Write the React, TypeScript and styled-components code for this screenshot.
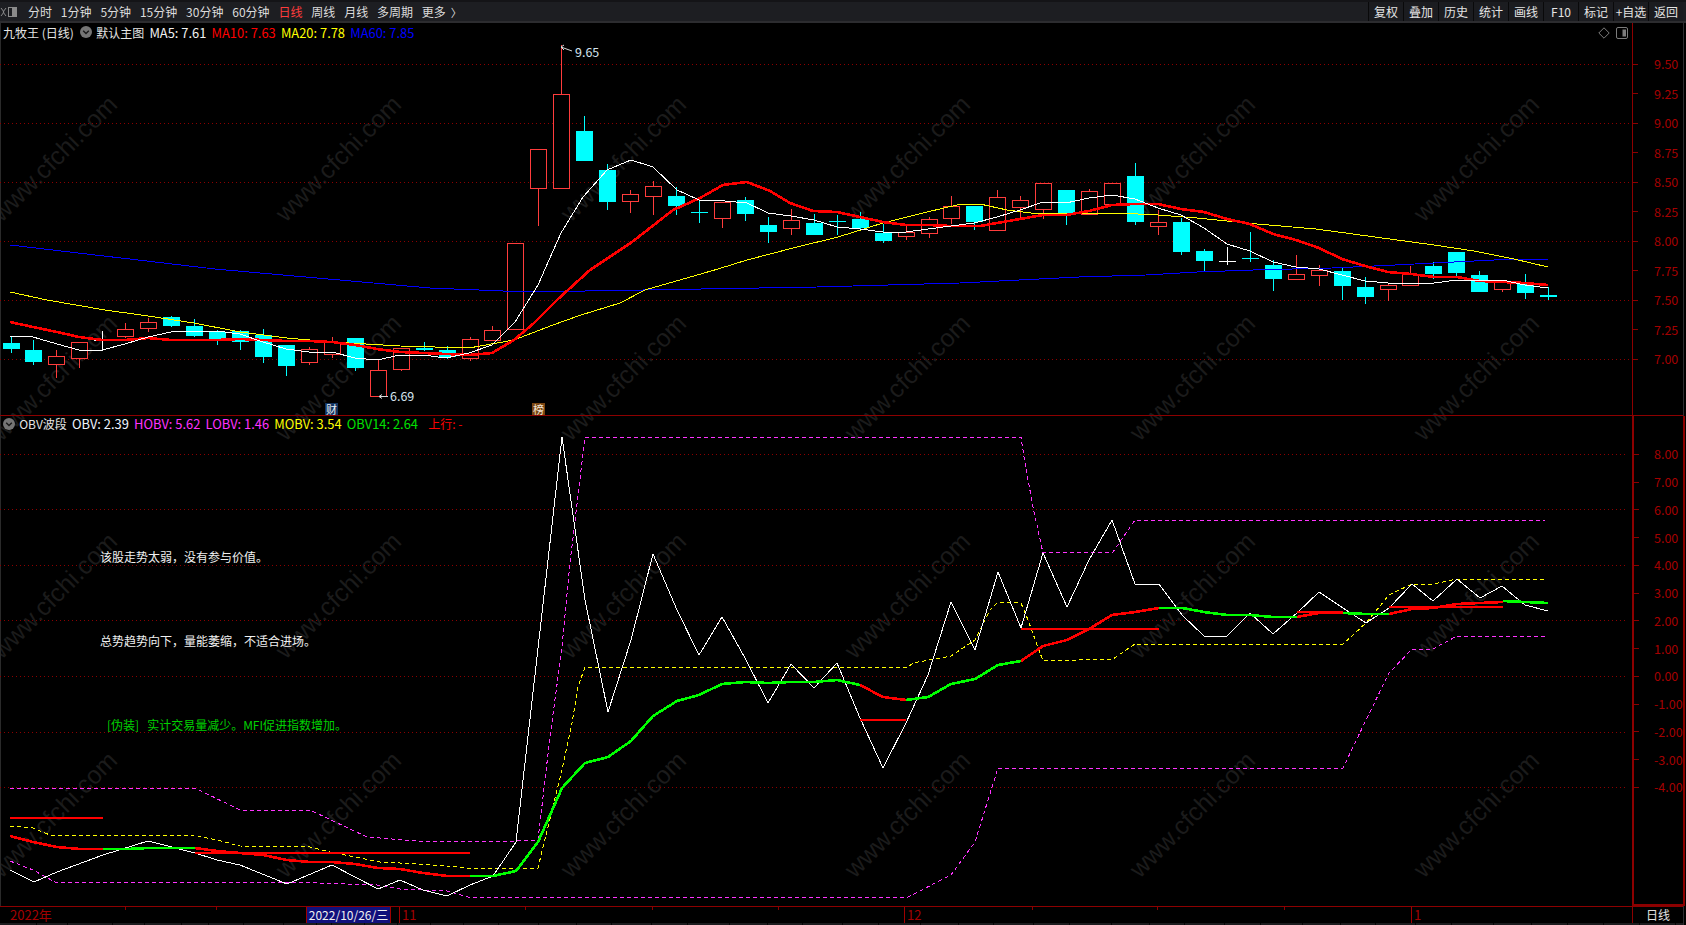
import React from "react";
import styled, { createGlobalStyle } from "styled-components";

const FONT = `"Noto Sans CJK SC", "Liberation Sans", sans-serif`;
const AXIS_RED = "#8c0000";

const GlobalStyle = createGlobalStyle`
  html, body { margin: 0; padding: 0; background: #000; overflow: hidden; }
  #root { width: 1686px; height: 925px; }
`;

const Screen = styled.div`
  width: 1686px;
  height: 925px;
  display: flex;
  flex-direction: column;
  background: #000;
  color: #ddd;
  font: 12px/16px ${FONT};
  overflow: hidden;
`;

/* ---------- toolbar ---------- */
const Toolbar = styled.header`
  flex: 0 0 23px;
  box-sizing: border-box;
  display: flex;
  align-items: stretch;
  background: #1d1e22;
  border-top: 2px solid #141417;
  border-bottom: 2px solid #2c2c2f;
`;
const LogoButton = styled.div`
  flex: 0 0 28px;
  display: flex;
  align-items: center;
`;
const PeriodList = styled.nav`
  display: flex;
  align-items: center;
  gap: 8.85px;
`;
const PeriodItem = styled.span<{ $active?: boolean }>`
  white-space: nowrap;
  color: ${(p) => (p.$active ? "#ff3c3c" : "#dcdcdc")};
`;
const Chevron = styled.span`
  margin-left: -4px;
  font-size: 11px;
  color: #dcdcdc;
`;
const ToolGroup = styled.div`
  margin-left: auto;
  margin-right: 3px;
  display: flex;
`;
const ToolButton = styled.span`
  width: 35px;
  box-sizing: border-box;
  display: flex;
  align-items: center;
  justify-content: center;
  white-space: nowrap;
  border-left: 1px solid #09090a;
  background: #1b1c20;
  color: #e4e4e4;
`;

/* ---------- workspace ---------- */
const Workspace = styled.main`
  position: relative;
  flex: 1;
  display: flex;
  flex-direction: column;
  width: 1684px;
  box-sizing: border-box;
  border-right: 1px solid #2e2e30;
`;
const WatermarkLayer = styled.div`
  position: absolute;
  top: 26px;
  left: -88px;
  width: 1706px;
  display: grid;
  grid-template-columns: repeat(6, 284.4px);
  grid-auto-rows: 218.7px;
  pointer-events: none;
`;
const Watermark = styled.span`
  display: flex;
  align-items: center;
  justify-content: center;
  transform: rotate(-45deg);
  font: 25px "Liberation Sans", sans-serif;
  color: #1b1b1b;
  white-space: nowrap;
`;
const Pane = styled.section<{ $height: number; $ruled?: boolean }>`
  position: relative;
  flex: 0 0 ${(p) => p.$height}px;
  display: flex;
  border-top: ${(p) => (p.$ruled ? `1px solid ${AXIS_RED}` : "0")};
`;
const Plot = styled.div`
  position: relative;
  flex: 0 0 1632px;
  box-shadow: inset 1px 0 0 #2a2a2a;
`;
const ChartSvg = styled.svg`
  display: block;
  position: absolute;
  inset: 0;
`;
const Axis = styled.div<{ $pad: number; $boxed?: boolean }>`
  flex: 1;
  box-sizing: border-box;
  padding-top: ${(p) => p.$pad}px;
  border-left: ${(p) => (p.$boxed ? 2 : 1)}px solid ${AXIS_RED};
  border-right: ${(p) => (p.$boxed ? `2px solid ${AXIS_RED}` : "0")};
  border-bottom: ${(p) => (p.$boxed ? `2px solid ${AXIS_RED}` : "0")};
`;
const AxisRow = styled.div<{ $h: number; $indent: number }>`
  height: ${(p) => p.$h}px;
  display: flex;
  align-items: center;
  font-size: 12.5px;
  color: #a40000;
  &::before {
    content: "";
    flex: 0 0 5px;
    height: 1px;
    margin-right: ${(p) => p.$indent}px;
    background: ${AXIS_RED};
  }
`;

/* ---------- overlays on the plots ---------- */
const Legend = styled.div<{ $top: number }>`
  position: absolute;
  top: ${(p) => p.$top}px;
  left: 3px;
  display: flex;
  align-items: center;
  gap: 5.2px;
  white-space: nowrap;
`;
const LegendItem = styled.span<{ $color?: string; $gap?: number; $latin?: boolean }>`
  color: ${(p) => p.$color ?? "#e4e4e4"};
  margin-left: ${(p) => p.$gap ?? 0}px;
  font-size: ${(p) => (p.$latin ? 12.9 : 12)}px;
`;
const CornerIcons = styled.div`
  position: absolute;
  top: 4px;
  right: 4px;
  display: flex;
  align-items: center;
  gap: 6.5px;
`;
const Note = styled.div<{ $x: number; $y: number; $color?: string }>`
  position: absolute;
  left: ${(p) => p.$x}px;
  top: ${(p) => p.$y}px;
  white-space: nowrap;
  color: ${(p) => p.$color ?? "#f0f0f0"};
`;
const NoteTag = styled.span`
  margin-right: 8px;
`;
const EventTag = styled.span<{ $x: number; $bg: string; $color: string }>`
  position: absolute;
  left: ${(p) => p.$x}px;
  top: 380px;
  width: 13px;
  height: 12px;
  font-size: 11px;
  line-height: 12px;
  text-align: center;
  background: ${(p) => p.$bg};
  color: ${(p) => p.$color};
`;

/* ---------- time axis ---------- */
const TimeAxis = styled.footer`
  position: relative;
  flex: 0 0 16px;
  box-sizing: border-box;
  display: grid;
  grid-template-columns: 306px 85px 8px 505px 507px 221px 1fr;
  border-top: 1px solid ${AXIS_RED};
  color: #a40000;
`;
const YearLabel = styled.span`
  padding-left: 10px;
  font-size: 13px;
`;
const DateBadge = styled.span`
  background: #10107c;
  color: #f0f0f0;
  border-left: 1px solid #a00000;
  border-right: 1px solid #a00000;
  text-align: center;
  white-space: nowrap;
`;
const MonthLabel = styled.span`
  border-left: 1px solid #a00000;
  padding-left: 2px;
  font-size: 13px;
`;
const PeriodCell = styled.span`
  border-left: 1px solid ${AXIS_RED};
  text-align: center;
  color: #e4e4e4;
`;
const AxisTicks = styled.svg`
  position: absolute;
  left: 0;
  top: 0;
`;
const StatusStrip = styled.div`
  flex: 1;
  display: flex;
  background: #1c1c1e;
`;
const StatusCell = styled.span<{ $w: number }>`
  flex: 0 0 ${(p) => p.$w}px;
  box-sizing: border-box;
  border-right: 1px solid #060606;
`;

/* ---------- data ---------- */
type Kind = "r" | "c" | "w";
type Candle = [number, number, number, number, Kind];
const candles: Candle[] = [
  [336,343,349,353,"c"],[340,350,362,365,"c"],[350,356,364,378,"r"],[342,342,358,368,"r"],[331,340,340,351,"w"],
  [323,329,336,338,"r"],[318,322,328,332,"r"],[316,317,326,327,"c"],[319,326,336,337,"c"],[330,332,339,345,"c"],
  [330,331,342,350,"c"],[329,335,357,363,"c"],[345,345,366,376,"c"],[347,349,362,365,"r"],[337,342,354,358,"r"],
  [338,338,368,371,"c"],[359,370,396,396,"r"],[348,348,369,371,"r"],[342,348,350,351,"c"],[346,350,357,359,"c"],
  [337,339,358,361,"r"],[326,330,340,340,"r"],[243,243,329,329,"r"],[149,149,188,226,"r"],[45,94,188,188,"r"],
  [116,131,161,161,"c"],[164,170,202,210,"c"],[190,194,201,213,"r"],[181,186,196,215,"r"],[187,196,206,215,"c"],
  [200,212,212,223,"c"],[202,202,218,228,"r"],[197,200,214,221,"c"],[217,225,232,243,"c"],[209,220,228,235,"r"],
  [214,223,235,235,"c"],[215,221,221,235,"c"],[212,219,228,231,"c"],[224,233,241,243,"c"],[225,232,236,240,"r"],
  [217,219,233,238,"r"],[196,206,218,224,"r"],[206,206,222,230,"c"],[190,197,230,230,"r"],[196,200,207,219,"r"],
  [183,183,209,219,"r"],[190,190,213,225,"c"],[189,191,214,214,"r"],[183,183,204,204,"r"],[163,176,222,225,"c"],
  [210,222,226,235,"r"],[218,222,252,255,"c"],[249,251,261,272,"c"],[247,261,261,265,"w"],[232,258,258,262,"c"],
  [260,265,279,291,"c"],[255,274,279,279,"r"],[265,270,275,286,"r"],[268,271,286,300,"c"],[277,287,297,304,"c"],
  [283,285,289,301,"r"],[266,274,285,285,"r"],[262,266,274,279,"c"],[252,252,273,276,"c"],[271,275,292,292,"c"],
  [282,282,289,292,"r"],[274,283,293,299,"c"],[287,295,297,300,"c"],
];
const cx = (i: number) => Math.round(10.5 + 22.95 * i);

const ma5 = "10,336 33,337 57,344 79,350 102,350 125,344 148,337 171,332 194,331 217,331 240,334 263,342 286,349 309,352 332,352 355,358 377,360 400,355 423,355 446,358 469,353 492,345 515,322 538,285 561,233 583,197 607,170 631,160 653,167 677,190 699,200 725,201 747,203 768,213 791,216 814,220 837,227 860,229 883,232 906,232 928,229 951,226 974,223 997,217 1020,210 1043,202 1066,203 1089,198 1112,195 1135,199 1158,208 1181,215 1204,228 1227,244 1250,251 1273,262 1296,267 1319,269 1342,275 1365,281 1388,283 1411,283 1434,283 1457,280 1480,280 1502,280 1525,285 1548,288";
const ma10 = "10,322 33,327 57,332 79,337 102,340 125,340 148,338 171,340 194,340 217,340 240,339 263,340 286,341 309,341 332,342 355,345 377,349 400,352 423,353 446,354 469,355 492,353 514,340 534,323 557,300 590,270 632,242 673,210 700,198 723,185 747,182 770,191 790,203 813,211 837,212 860,217 883,222 906,225 928,225 951,226 980,226 1020,219 1043,215 1066,215 1089,211 1112,205 1135,204 1158,204 1181,209 1204,212 1227,219 1250,224 1273,234 1296,240 1319,248 1342,259 1365,266 1388,272 1411,274 1434,277 1457,277 1480,281 1502,282 1525,283 1548,285";
const ma20 = "10,292 47,300 105,310 148,316 194,323 240,332 287,338 332,342 400,346 469,348 480,346 514,340 553,325 581,315 620,303 645,290 718,269 747,260 793,248 838,237 883,223 927,212 957,205 980,204 1007,210 1031,213 1118,213 1158,215 1197,218 1257,224 1316,229 1375,237 1434,245 1474,251 1514,259 1548,267";
const ma60 = "10,245 215,269 430,288 527,292 817,287 960,283 1079,277 1146,275 1197,272 1253,270 1332,268 1395,265 1454,262 1514,259 1548,259";

const obv = "10,870 34,882 57,872 103,855 148,841 195,853 217,860 240,865 287,884 332,865 378,889 400,880 423,890 447,896 470,885 493,876 516,842 562,437 585,600 608,712 631,640 653,554 677,610 699,655 722,617 745,658 768,703 791,664 814,688 837,663 860,718 883,768 906,723 928,675 951,602 975,650 998,572 1021,628 1043,553 1067,607 1089,560 1112,520 1135,584 1159,584 1182,615 1204,636 1227,636 1250,613 1273,634 1297,613 1319,592 1343,608 1366,623 1389,608 1412,584 1433,601 1457,579 1480,598 1502,586 1525,605 1548,611";
const mobv = "10,826 33,828 50,835 193,835 217,840 240,846 310,847 330,852 380,862 400,863 447,866 467,868 538,868 543,847 562,770 572,723 578,687 585,667 908,667 913,663 951,656 975,640 990,610 998,602 1021,603 1028,620 1043,661 1113,659 1135,644 1343,644 1366,623 1389,595 1412,584 1433,584 1457,579 1545,579";
const hobv = "10,788 195,788 240,810 310,810 367,837 417,841 516,841 538,840 550,737 562,647 570,563 585,437 1021,437 1025,463 1033,507 1043,553 1063,552 1113,552 1135,520 1545,520";
const lobv = "10,861 33,870 55,882 287,882 377,885 400,889 447,891 468,897 908,897 951,875 975,842 998,768 1343,768 1366,720 1389,673 1412,649 1433,649 1457,636 1546,636";

const obv14: [string, string][] = [
  ["#ff0000", "10,836 33,842 57,847 80,849 103,849"],
  ["#00ff00", "103,849 127,849 148,848 195,848"],
  ["#ff0000", "195,848 217,851 240,853 263,855 287,860 310,862 332,862 355,864 378,868 400,869 423,873 447,876 470,876"],
  ["#00ff00", "470,876 493,876 516,871 538,842 562,788 585,763 608,757 631,741 653,716 677,701 699,695 722,684 745,682 768,683 791,682 814,682 837,680 860,685"],
  ["#ff0000", "860,685 883,697 906,700"],
  ["#00ff00", "906,700 928,697 951,684 975,679 998,665 1021,661"],
  ["#ff0000", "1021,661 1043,646 1067,640 1089,629 1112,615 1135,612 1159,608"],
  ["#00ff00", "1159,608 1182,608 1204,612 1227,615 1250,615 1273,617 1297,617"],
  ["#ff0000", "1297,617 1319,613 1343,613"],
  ["#00ff00", "1343,613 1366,614 1389,614"],
  ["#ff0000", "1389,614 1412,609 1433,608 1457,604 1480,603 1503,602"],
  ["#00ff00", "1503,601 1525,602 1548,603"],
];
const levels = [
  [10, 818, 103],
  [195, 853, 470],
  [860, 720, 906],
  [1021, 629, 1159],
  [1297, 612, 1343],
  [1389, 607, 1503],
];

const priceLabels = ["9.50","9.25","9.00","8.75","8.50","8.25","8.00","7.75","7.50","7.25","7.00"];
const obvLabels = ["8.00","7.00","6.00","5.00","4.00","3.00","2.00","1.00","0.00","-1.00","-2.00","-3.00","-4.00"];
const priceGrid = [64.5, 123.5, 182.5, 241.5, 300.5, 359.5];
const obvGrid = [454.5, 509.5, 565.5, 620.5, 676.5, 732.5, 787.5];
const periods = ["分时","1分钟","5分钟","15分钟","30分钟","60分钟","日线","周线","月线","多周期","更多"];
const tools = ["复权","叠加","历史","统计","画线","F10","标记","+自选","返回"];
const tickXs = [125, 216, 525, 652, 778, 1032, 1157, 1284];
const statusCells = [37, 31, 45, 32, 37, 27, 35, 40, 33, 15, 33, 33, 33, 33, 35, 40, 38, 35, 40, 36, 42, 38, 35, 40, 36, 42, 38, 35, 40, 36, 42, 38, 35, 40, 36, 42, 38, 35, 40, 36, 42, 38, 36, 36, 36, 36, 36, 36, 36, 36, 36];
const watermarks = Array.from({ length: 24 }, (_, i) => i);

const CANDLE_COLOR: Record<Kind, string> = { r: "#ff3c3c", c: "#00ffff", w: "#ffffff" };

function CandleShape({ c, i }: { c: Candle; i: number }) {
  const [hi, top, bot, lo, kind] = c;
  const x = cx(i);
  const color = CANDLE_COLOR[kind];
  const px = x + 0.5;
  if (bot - top < 1) {
    return (
      <g stroke={color}>
        <line x1={px} x2={px} y1={hi} y2={lo} />
        <line x1={x - 8} x2={x + 9} y1={top + 0.5} y2={top + 0.5} />
      </g>
    );
  }
  return (
    <g>
      {hi < top && <line x1={px} x2={px} y1={hi} y2={top} stroke={color} />}
      {lo > bot && <line x1={px} x2={px} y1={bot} y2={lo} stroke={color} />}
      {kind === "r" ? (
        <rect x={x - 7.5} y={top + 0.5} width={16} height={bot - top} fill="#000" stroke={color} />
      ) : (
        <rect x={x - 8} y={top} width={17} height={bot - top} fill={color} />
      )}
    </g>
  );
}

const CircleChevron = () => (
  <svg width="12" height="12" viewBox="0 0 12 12">
    <circle cx="6" cy="6" r="6" fill="#757575" />
    <path d="M3.2 4.8 6 7.6l2.8-2.8" fill="none" stroke="#1a1a1a" strokeWidth="1.4" />
  </svg>
);

const LogoIcon = () => (
  <svg width="18" height="12" viewBox="0 0 18 12">
    <path d="M1 2l3 4-3 4M6 2 3 6l3 4" fill="none" stroke="#8a8a8a" strokeWidth="1" />
    <rect x="8.5" y="1.5" width="8" height="9" fill="#1d1e22" stroke="#8a8a8a" />
    <rect x="12" y="2" width="4" height="8" fill="#8a8a8a" />
  </svg>
);

const DiamondIcon = () => (
  <svg width="12" height="12" viewBox="0 0 12 12">
    <path d="M6 .8 11.2 6 6 11.2.8 6z" fill="none" stroke="#7c7c7c" />
  </svg>
);

const SplitIcon = () => (
  <svg width="12" height="12" viewBox="0 0 12 12">
    <rect x=".5" y=".5" width="11" height="11" rx="1.5" fill="none" stroke="#7c7c7c" />
    <rect x="6.5" y="2.5" width="3.5" height="7" fill="#7c7c7c" />
  </svg>
);

const App: React.FC = () => (
  <Screen>
    <GlobalStyle />
    <Toolbar>
      <LogoButton>
        <LogoIcon />
      </LogoButton>
      <PeriodList>
        {periods.map((p) => (
          <PeriodItem key={p} $active={p === "日线"}>{p}</PeriodItem>
        ))}
        <Chevron>〉</Chevron>
      </PeriodList>
      <ToolGroup>
        {tools.map((t) => (
          <ToolButton key={t}>{t}</ToolButton>
        ))}
      </ToolGroup>
    </Toolbar>

    <Workspace>
      <WatermarkLayer>
        {watermarks.map((i) => (
          <Watermark key={i}>www.cfchi.com</Watermark>
        ))}
      </WatermarkLayer>

      <Pane $height={392}>
        <Plot>
          <ChartSvg width="1632" height="392" viewBox="0 23 1632 392">
            <g shapeRendering="crispEdges">
              {priceGrid.map((y) => (
                <line key={y} x1="0" x2="1632" y1={y} y2={y} stroke={AXIS_RED} strokeDasharray="1 3" />
              ))}
              {candles.map((c, i) => (
                <CandleShape key={i} c={c} i={i} />
              ))}
              <polyline points={ma60} fill="none" stroke="#0000ff" strokeWidth="1" />
              <polyline points={ma20} fill="none" stroke="#ffff00" strokeWidth="1" />
              <polyline points={ma10} fill="none" stroke="#ff0000" strokeWidth="2.6" />
              <polyline points={ma5} fill="none" stroke="#ffffff" strokeWidth="1" />
            </g>
            <path d="M561 47l11 4M561 47l3-2M561 47l3 3" fill="none" stroke="#d8d8d8" />
            <text x="575" y="57" fill="#d5e4ee" fontSize="12.5" fontFamily={FONT}>9.65</text>
            <path d="M379 396.5h9M379 396.5l3-2M379 396.5l3 2" fill="none" stroke="#d8d8d8" />
            <text x="390" y="401" fill="#d5e4ee" fontSize="12.5" fontFamily={FONT}>6.69</text>
          </ChartSvg>
          <Legend $top={2}>
            <LegendItem>九牧王 (日线)</LegendItem>
            <LegendItem $gap={1}><CircleChevron /></LegendItem>
            <LegendItem $gap={-1}>默认主图</LegendItem>
            <LegendItem $latin $color="#f0f0f0">MA5: 7.61</LegendItem>
            <LegendItem $latin $color="#ff0000">MA10: 7.63</LegendItem>
            <LegendItem $latin $color="#ffff00">MA20: 7.78</LegendItem>
            <LegendItem $latin $color="#0000ff">MA60: 7.85</LegendItem>
          </Legend>
          <CornerIcons>
            <DiamondIcon />
            <SplitIcon />
          </CornerIcons>
          <EventTag $x={325} $bg="#12335f" $color="#e8eef5">财</EventTag>
          <EventTag $x={532} $bg="#7a4512" $color="#f3e6d6">榜</EventTag>
        </Plot>
        <Axis $pad={26.25}>
          {priceLabels.map((l) => (
            <AxisRow key={l} $h={29.5} $indent={16}>{l}</AxisRow>
          ))}
        </Axis>
      </Pane>

      <Pane $height={490} $ruled>
        <Plot>
          <ChartSvg width="1632" height="489" viewBox="0 416 1632 489">
            <g shapeRendering="crispEdges">
              {obvGrid.map((y) => (
                <line key={y} x1="0" x2="1628" y1={y} y2={y} stroke={AXIS_RED} strokeDasharray="1 3" />
              ))}
              <polyline points={lobv} fill="none" stroke="#ff33ff" strokeDasharray="4 3" />
              <polyline points={hobv} fill="none" stroke="#ff33ff" strokeDasharray="4 3" />
              <polyline points={mobv} fill="none" stroke="#ffff00" strokeDasharray="4 3" />
              <polyline points={obv} fill="none" stroke="#ffffff" />
              {obv14.map(([color, pts]) => (
                <polyline key={pts} points={pts} fill="none" stroke={color} strokeWidth="2.6" />
              ))}
              {levels.map(([x1, y, x2]) => (
                <line key={x1} x1={x1} x2={x2} y1={y} y2={y} stroke="#ff0000" strokeWidth="2.6" />
              ))}
            </g>
          </ChartSvg>
          <Legend $top={0}>
            <CircleChevron />
            <LegendItem $gap={-1}>OBV波段</LegendItem>
            <LegendItem $latin $color="#eef4ff">OBV: 2.39</LegendItem>
            <LegendItem $latin $color="#ff33ff">HOBV: 5.62</LegendItem>
            <LegendItem $latin $color="#ff33ff">LOBV: 1.46</LegendItem>
            <LegendItem $latin $color="#ffff00">MOBV: 3.54</LegendItem>
            <LegendItem $latin $color="#00e000">OBV14: 2.64</LegendItem>
            <LegendItem $color="#ff0000" $gap={5}>上行: -</LegendItem>
          </Legend>
          <Note $x={100} $y={133}>该股走势太弱，没有参与价值。</Note>
          <Note $x={100} $y={217}>总势趋势向下，量能萎缩，不适合进场。</Note>
          <Note $x={107} $y={301} $color="#00d000"><NoteTag>[伪装]</NoteTag>实计交易量减少。MFI促进指数增加。</Note>
        </Plot>
        <Axis $pad={24.4} $boxed>
          {obvLabels.map((l) => (
            <AxisRow key={l} $h={27.75} $indent={15}>{l}</AxisRow>
          ))}
        </Axis>
      </Pane>

      <TimeAxis>
        <YearLabel>2022年</YearLabel>
        <DateBadge>2022/10/26/三</DateBadge>
        <span />
        <MonthLabel>11</MonthLabel>
        <MonthLabel>12</MonthLabel>
        <MonthLabel>1</MonthLabel>
        <PeriodCell>日线</PeriodCell>
        <AxisTicks width="1632" height="3">
          {tickXs.map((x) => (
            <line key={x} x1={x + 0.5} x2={x + 0.5} y1="0" y2="3" stroke={AXIS_RED} />
          ))}
        </AxisTicks>
      </TimeAxis>

      <StatusStrip>
        {statusCells.map((w, i) => (
          <StatusCell key={i} $w={w} />
        ))}
      </StatusStrip>
    </Workspace>
  </Screen>
);

export default App;
